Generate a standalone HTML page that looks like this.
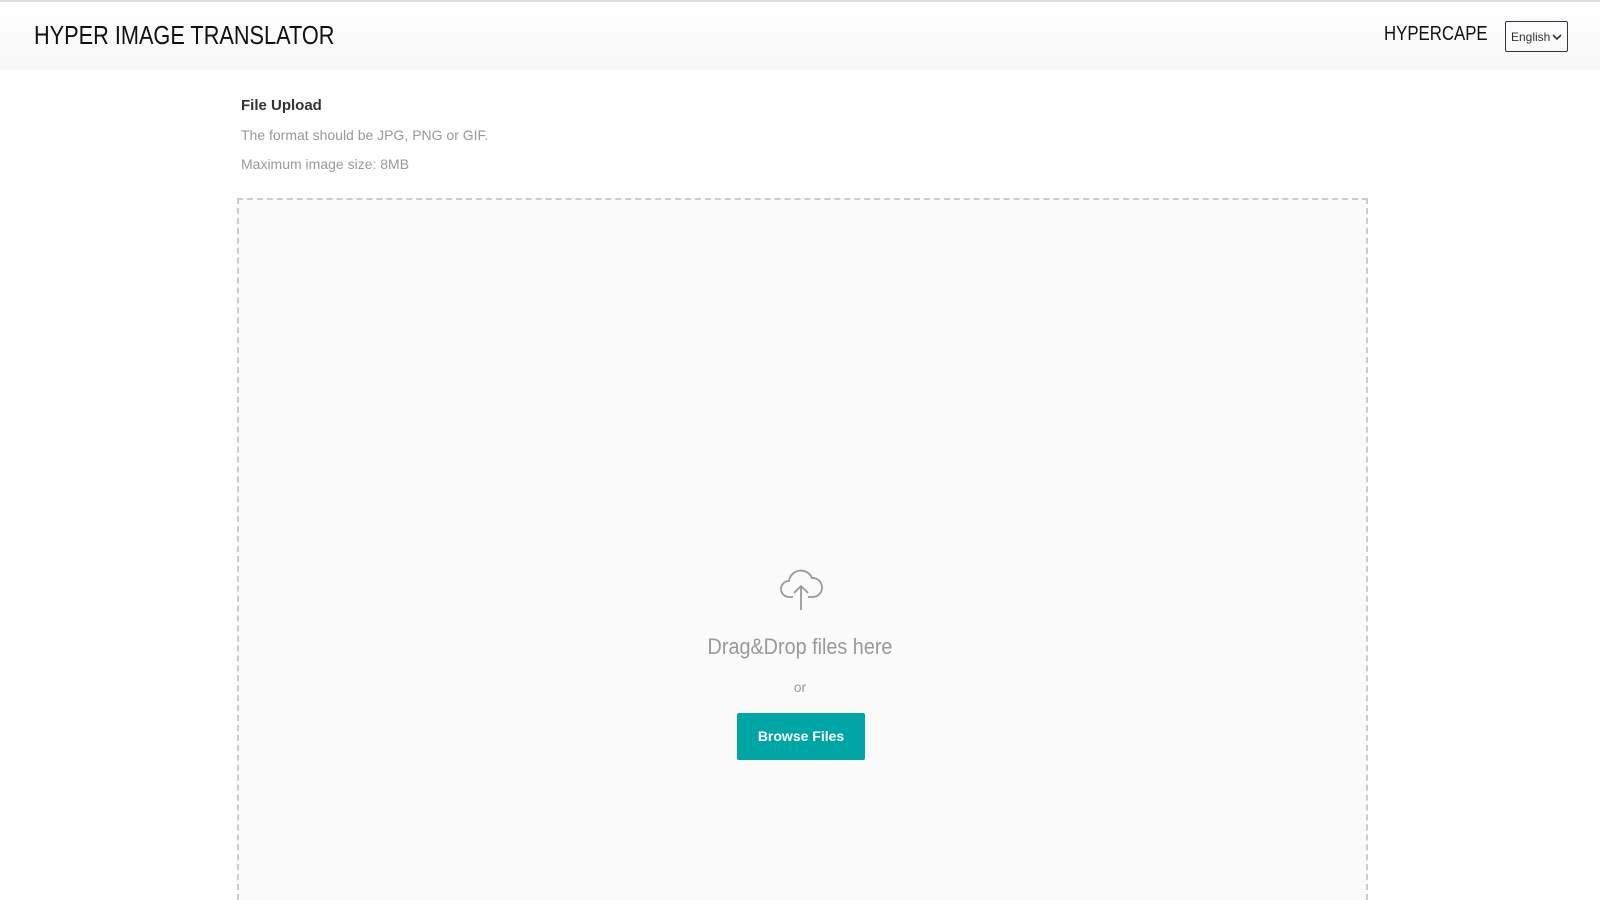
<!DOCTYPE html>
<html style="height:900px;overflow:hidden"><head><meta charset="utf-8"><style>
*{margin:0;padding:0;box-sizing:border-box}
body{width:1600px;height:900px;overflow:hidden;background:#fff;font-family:"Liberation Sans","Noto Sans CJK KR",sans-serif;position:relative;border-top:2px solid #ddd}
.wrap{position:absolute;left:0;top:0;width:1600px;height:898px;overflow:hidden}
.hdr{position:absolute;left:0;top:0;width:1600px;height:66px;background:linear-gradient(#fff,#f7f7f7);box-shadow:0 2px 4px rgba(0,0,0,0.03)}
.title{position:absolute;left:34px;top:18px;font-size:26px;color:#111;transform:scaleX(0.835);transform-origin:left;white-space:nowrap}
.brand{position:absolute;left:1384px;top:21px;font-size:20px;color:#111;transform:scaleX(0.84);transform-origin:left;white-space:nowrap}
.sel{position:absolute;left:1505px;top:19px;width:63px;height:31px;border:1px solid #334;border-radius:2px;font-size:12px;color:#333;padding:8px 0 0 5px}
.sel svg{position:absolute;right:5px;top:12px}
.h{position:absolute;left:241px;top:95px;font-size:15px;font-weight:bold;color:#333}
.t{position:absolute;left:241px;font-size:14px;color:#999}
.box{position:absolute;left:237px;top:196px;width:1131px;height:702px;border:2px dashed #ccc;border-bottom:none;background:#fafafa}
.dd{position:absolute;left:0;width:1600px;text-align:center;color:#999}
.btn{position:absolute;left:737px;top:711px;width:128px;height:47px;background:#00a6a6;border-radius:2px;color:#fff;font-weight:bold;font-size:14px;text-align:center;line-height:47px}
</style></head><body><div class="wrap">
<div class="hdr">
<div class="title">HYPER IMAGE TRANSLATOR</div>
<div class="brand">HYPERCAPE</div>
<div class="sel">English<svg width="10" height="7" viewBox="0 0 10 7"><path d="M1 1l4 4 4-4" fill="none" stroke="#333" stroke-width="1.6"/></svg></div>
</div>
<div class="h">File Upload</div>
<div class="t" style="top:125px">The format should be JPG, PNG or GIF.</div>
<div class="t" style="top:154px">Maximum image size: 8MB</div>
<div class="box"></div>
<svg style="position:absolute;left:778px;top:564px" width="46" height="46" viewBox="0 0 46 46"><path d="M15 31H11a8 8 0 0 1 0-16 12 12 0 0 1 23-3 9 9 0 0 1 1 19h-5" fill="none" stroke="#999" stroke-width="1.8"/><path d="M23 44V20M16 27l7-7 7 7" fill="none" stroke="#999" stroke-width="1.8"/></svg>
<div class="dd" style="top:632px;font-size:22px;transform:scaleX(0.9)">Drag&amp;Drop files here</div>
<div class="dd" style="top:677px;font-size:14px">or</div>
<div class="btn">Browse Files</div>
</div></body></html>
